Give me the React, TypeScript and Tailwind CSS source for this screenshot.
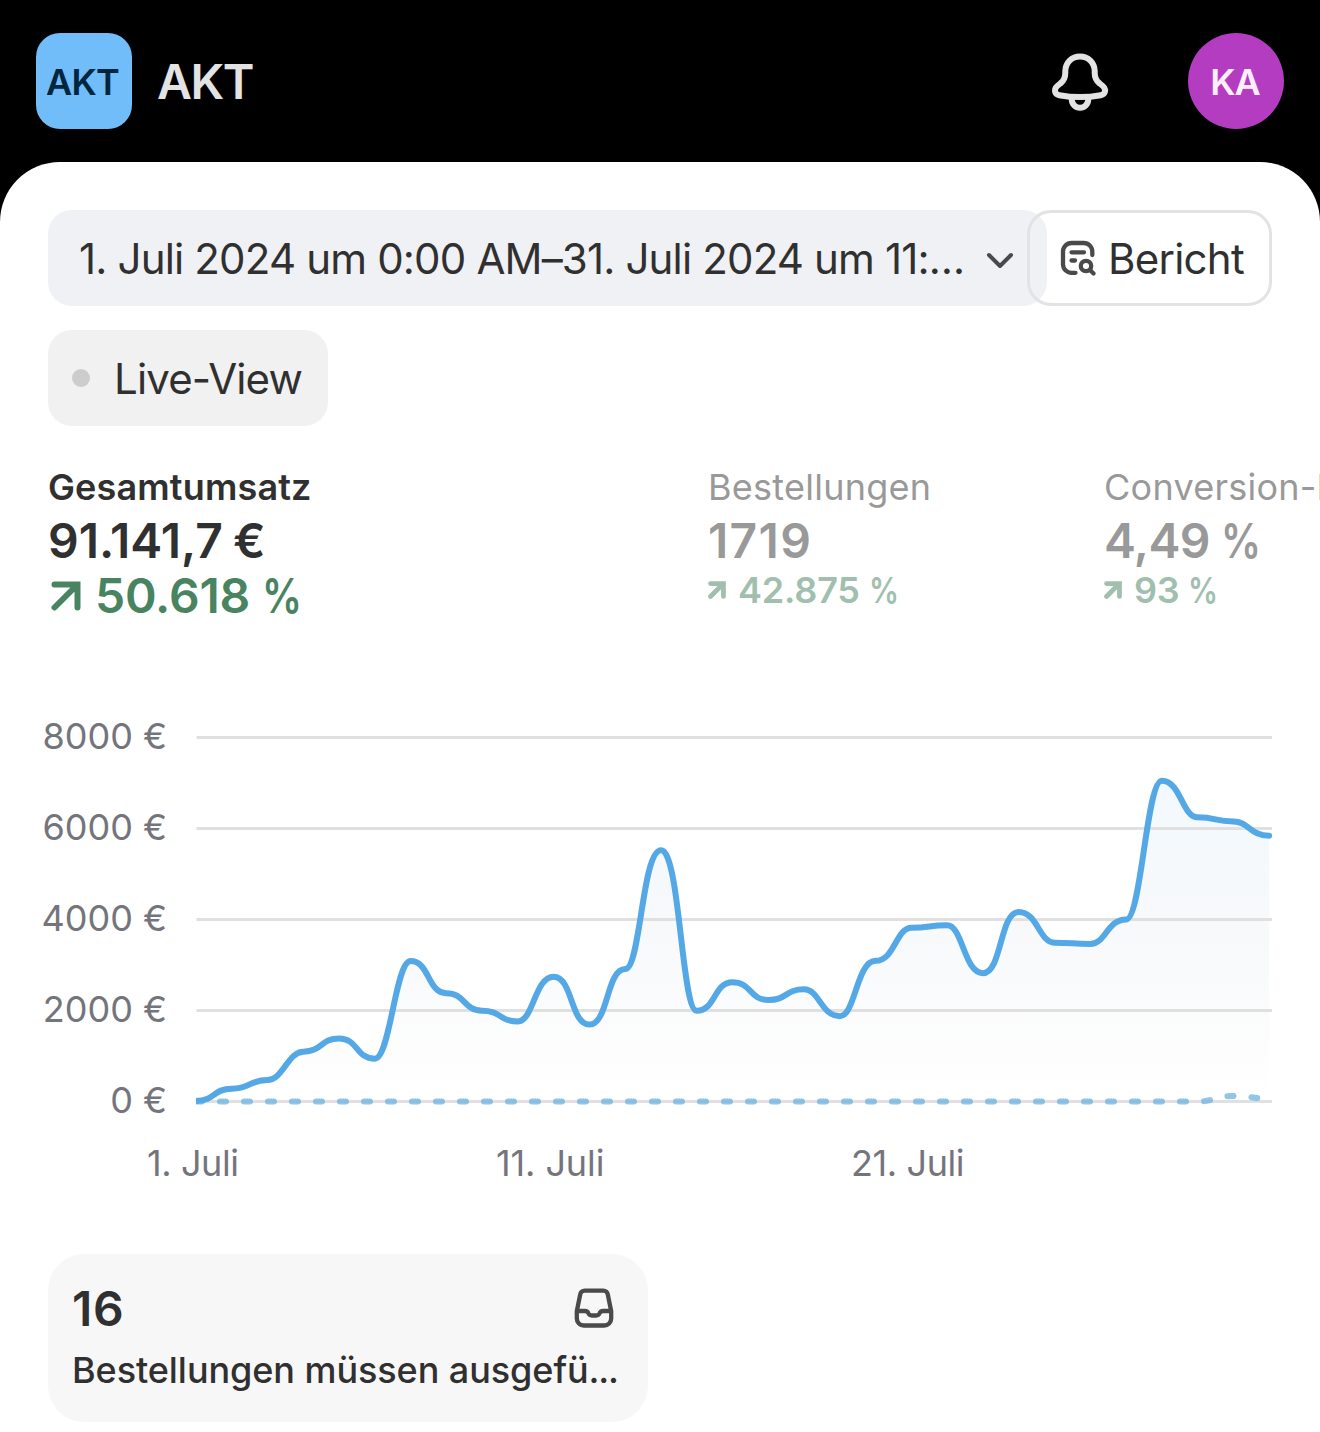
import React from 'react';

const revenue = [0, 270, 460, 1085, 1375, 930, 3075, 2370, 1985, 1750, 2730, 1680, 2900, 5510, 1985, 2610, 2220, 2455, 1865, 3080, 3805, 3865, 2810, 4155, 3480, 3450, 3990, 7040, 6235, 6145, 5830];

const PLOT_WIDTH = 1076;
const STEP = 35.77;
const BASELINE = 384;
const toY = (value: number) => BASELINE - value * 0.0455;

// Handle length at a point: shorter on the side that is much steeper than the other
const handle = (own: number, other: number) => STEP * (Math.abs(own) > 2 * Math.abs(other) ? 0.43 : 0.53);

// Every point gets a flat tangent, so the line eases from one day to the next
const smoothPath = (values: number[]) =>
  values
    .map((value, i) => {
      const x = i * STEP;
      const y = toY(value);
      if (i === 0) return `M0 ${y}`;
      const rise = value - values[i - 1];
      const before = i > 1 ? values[i - 1] - values[i - 2] : rise;
      const after = i < values.length - 1 ? values[i + 1] - value : rise;
      return `C${x - STEP + handle(rise, before)} ${toY(values[i - 1])} ${x - handle(rise, after)} ${y} ${x} ${y}`;
    })
    .join(' ');

const linePath = smoothPath(revenue);
const areaPath = `${linePath} V${BASELINE} H0 Z`;

const yLabels = ['8000 €', '6000 €', '4000 €', '2000 €', '0 €'];

const BellIcon = () => (
  <svg className="h-[60px] w-[60px]" viewBox="0 0 60 60" fill="none" stroke="#e3e3e3" strokeWidth="6" strokeLinejoin="round">
    <path d="M30 4.500c-8.300 0-14.500 6.200-14.700 14.500v2c0 4.500-1.700 8-5 10.500l-2.500 2c-4.500 3.500-3.500 8.700 1.500 9.700 13 2.400 28.400 2.400 41.400 0 5-1 6-6.200 1.500-9.700l-2.500-2c-3.300-2.500-5-6-5-10.500v-2C44.500 10.700 38.300 4.500 30 4.500Z" />
    <path d="M21.800 45.500v2a8.200 8.200 0 0 0 16.400 0v-2" />
  </svg>
);

const ReportIcon = () => (
  <svg className="h-[36px] w-[36px]" viewBox="0 0 36 36" fill="none" stroke="#4a4a4a" strokeWidth="4.300" strokeLinecap="round">
    <path d="M15.500 32.800h-4A8.500 8.500 0 0 1 3 24.300v-12.800A8.500 8.500 0 0 1 11.500 3h12.300a8.500 8.500 0 0 1 8.500 8.500V15" />
    <path d="M11.500 12.300h12.500M11.500 20.500h3.500" />
    <circle cx="26" cy="26" r="5.200" />
    <path d="m30 30 3.500 3.500" />
  </svg>
);

const InboxIcon = () => (
  <svg className="-mt-0.5 h-10 w-10" viewBox="0 0 40 40" fill="none" stroke="#4a4a4a" strokeWidth="4.300" strokeLinejoin="round">
    <path d="M10.700 2.600h18.600a4.600 4.600 0 0 1 4.500 3.900l3.400 16.700v7.300a7 7 0 0 1-7 7H9.800a7 7 0 0 1-7-7v-7.300L6.200 6.500a4.600 4.600 0 0 1 4.500-3.900Z" />
    <path d="M2.800 23h8c2 0 3.200 1 3.800 2.500.6 1.400 1.700 2 3.200 2h4.400c1.500 0 2.600-.6 3.200-2 .6-1.500 1.800-2.500 3.800-2.500h8" />
  </svg>
);

const TrendArrow = ({ className, strokeWidth }: { className: string; strokeWidth: number }) => (
  <svg className={className} viewBox="0 0 32 32" fill="none" stroke="currentColor" strokeWidth={strokeWidth} strokeLinecap="round">
    <path d="M4.500 4.500h23v23M27 5 4.500 27.500" />
  </svg>
);

const Percent = () => <span className="inline-block origin-left scale-x-[0.83]">%</span>;

interface MetricProps {
  label: string;
  value: React.ReactNode;
  change: string;
  className: string;
}

const Metric: React.FC<MetricProps> = ({ label, value, change, className }) => (
  <div className={`shrink-0 whitespace-nowrap text-[#999999] ${className}`}>
    <div className="text-[36px] leading-[48px] tracking-[0.25px]">{label}</div>
    <div className="text-[48px] font-semibold leading-[60px]">{value}</div>
    <div className="flex items-center gap-[13px] text-[36px] font-semibold leading-[38px] text-[#a0bfae]">
      <TrendArrow className="h-[18px] w-[18px]" strokeWidth={8.5} />
      <span className="-ml-px tracking-[-0.2px]">{change} <Percent /></span>
    </div>
  </div>
);

export default function App() {
  return (
    <div className="h-[1432px] w-[1320px] overflow-hidden bg-black font-['Inter',sans-serif] text-[#303030]">
      <header className="flex h-[162px] items-center px-9">
        <div className="flex h-24 w-24 items-center justify-center rounded-3xl bg-[#70bdfa] pr-[3px] pt-0.5 text-[36px] font-semibold tracking-[-0.8px] text-[#00263d]">AKT</div>
        <h1 className="ml-[25px] pt-0.5 text-[48px] font-semibold tracking-[-1.4px] text-[#e3e3e3]">AKT</h1>
        <button className="ml-auto mr-[78px] pt-0.5"><BellIcon /></button>
        <div className="flex h-24 w-24 items-center justify-center rounded-full bg-[#b43cc0] pr-0.5 pt-0.5 text-[36px] font-semibold tracking-[-1px] text-[#fdeffd]">KA</div>
      </header>

      <main className="h-[1270px] rounded-t-[60px] bg-white pt-12">
        {/* Filters */}
        <div className="flex px-12">
          <button className="flex h-24 w-[999px] shrink-0 items-center rounded-3xl bg-[#f0f1f4] pl-[31px] text-[42px]">
            <span className="whitespace-nowrap tracking-[-0.83px]">1. Juli 2024 um 0:00 AM–31. Juli 2024 um 11:…</span>
            <svg className="ml-auto mr-[33px] mt-1 h-[18px] w-[28px] shrink-0" viewBox="0 0 28 18" fill="none" stroke="#4a4a4a" strokeWidth="4" strokeLinecap="round" strokeLinejoin="round">
              <path d="m3 4 11 11L25 4" />
            </svg>
          </button>
          <button className="-ml-5 flex h-24 w-[245px] shrink-0 items-center rounded-3xl border-[3px] border-[#e3e3e3] pl-[30px] text-[42px]">
            <ReportIcon />
            <span className="ml-3 tracking-[-0.75px]">Bericht</span>
          </button>
        </div>
        <button className="ml-12 mt-6 flex h-24 w-[280px] items-center rounded-3xl bg-[#f1f1f1] pl-6 text-[42px]">
          <span className="h-[18px] w-[18px] rounded-full bg-[#cccccc]" />
          <span className="ml-6 whitespace-nowrap pt-px tracking-[-0.85px]">Live-View</span>
        </button>

        {/* Key figures */}
        <section className="mt-[37px] flex h-[168px] pl-12">
          <div className="w-[660px] shrink-0 whitespace-nowrap">
            <div className="text-[36px] font-semibold leading-[48px] tracking-[0.15px]">Gesamtumsatz</div>
            <div className="text-[48px] font-semibold leading-[60px] [word-spacing:-2px]">91.141,7 €</div>
            <div className="flex items-center gap-[13px] text-[48px] font-semibold leading-[50px] text-[#47845f]">
              <TrendArrow className="ml-0.5 h-8 w-8" strokeWidth={6} />
              <span className="tracking-[-0.2px]">50.618 <Percent /></span>
            </div>
          </div>
          <Metric label="Bestellungen" value={<span className="tracking-[1.3px]">1719</span>} change="42.875" className="w-[396px]" />
          <Metric label="Conversion-Rate" value={<span className="tracking-[-0.6px]">4,49 <Percent /></span>} change="93" className="w-[396px]" />
        </section>

        {/* Revenue chart */}
        <section className="mt-[86px] flex h-[410px]">
          <div className="-mt-1.5 flex w-[196px] flex-col gap-[43px] pr-[29px] pt-px text-right text-[36px] leading-[48px] text-[#74747c]">
            {yLabels.map((label) => (
              <span key={label} className="whitespace-nowrap">{label}</span>
            ))}
          </div>
          <svg className="h-[410px] w-[1076px]" viewBox={`0 0 ${PLOT_WIDTH} 410`} fill="none">
            <defs>
              <linearGradient id="revenueFill" x1="0" y1="60" x2="0" y2="384" gradientUnits="userSpaceOnUse">
                <stop offset="0" stopColor="#f2f9fe" />
                <stop offset="0.5" stopColor="#f8f9fb" />
                <stop offset="1" stopColor="#ffffff" />
              </linearGradient>
            </defs>
            <path d={areaPath} fill="url(#revenueFill)" />
            {yLabels.map((label, i) => (
              <path key={label} d={`M0.500 ${20.500 + i * 91}H${PLOT_WIDTH}`} stroke="#e0e0e0" strokeWidth="3" />
            ))}
            <path
              d="M0 384.500H1001C1018 384.500 1020 379 1037 379S1056 381.500 1073 381.500"
              stroke="#6db3df"
              strokeOpacity="0.75"
              strokeWidth="6"
              strokeLinecap="round"
              strokeDasharray="6 18"
              strokeDashoffset="-24"
            />
            <path d={linePath} stroke="#54a8e5" strokeWidth="6" strokeLinejoin="round" strokeLinecap="round" />
          </svg>
        </section>
        <div className="mt-3 flex h-12 text-[36px] leading-[48px] text-[#74747c]">
          <span className="ml-[147px] w-[349px] shrink-0 tracking-[-0.4px]">1. Juli</span>
          <span className="w-[355px] shrink-0 tracking-[-0.1px]">11. Juli</span>
          <span className="tracking-[-0.4px]">21. Juli</span>
        </div>

        {/* Open tasks */}
        <section className="ml-12 mt-[67px] h-[168px] w-[600px] rounded-[36px] bg-[#f7f7f7] px-6 pt-[25px]">
          <div className="flex h-[60px] items-center justify-between pr-2.5">
            <span className="text-[48px] font-semibold tracking-[0.8px]">16</span>
            <InboxIcon />
          </div>
          <p className="mt-[7px] whitespace-nowrap text-[36px] font-medium leading-[48px] tracking-[-0.07px]">
            Bestellungen müssen ausgefü<span className="tracking-[-1.2px]">...</span>
          </p>
        </section>
      </main>
    </div>
  );
}
